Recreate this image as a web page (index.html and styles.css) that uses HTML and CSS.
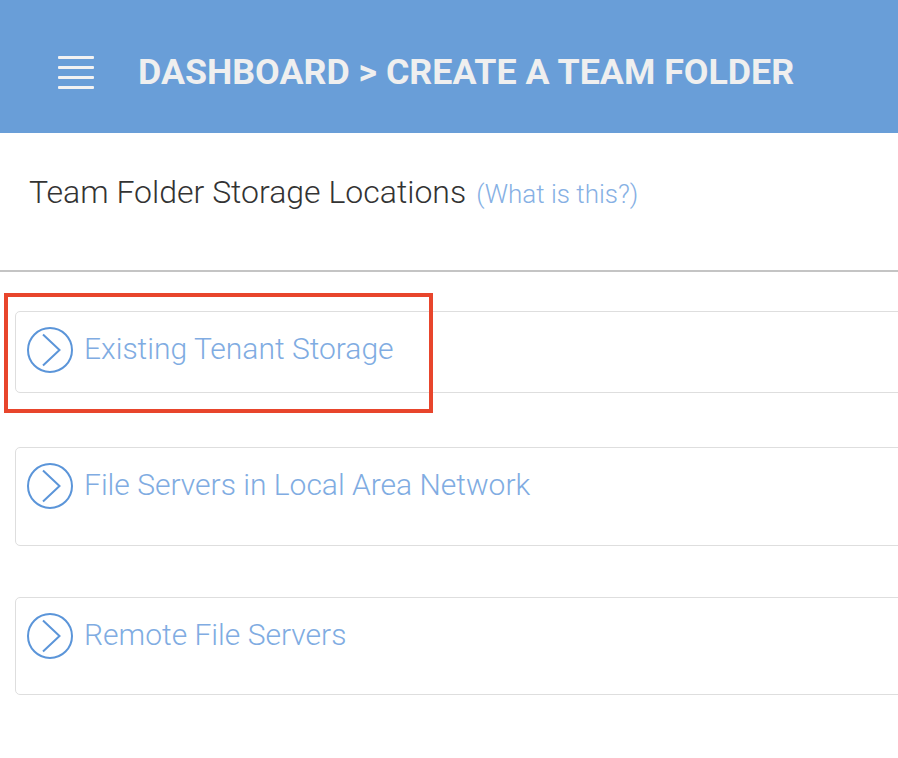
FILE: index.html
```html
<!DOCTYPE html>
<html>
<head>
  <title>Create a Team Folder</title>
  <meta name="viewport" content="width=device-width, initial-scale=1.0">
  <link rel="stylesheet" href="styles.css">
</head>
<body>
  <div class="topbar">
    <div class="menu-icon">
      <span></span><span></span><span></span><span></span>
    </div>
    <h1>DASHBOARD &gt; CREATE A TEAM FOLDER</h1>
  </div>

  <div class="section-head">
    <h2>Team Folder Storage Locations</h2>
    <a class="help" href="#">(What is this?)</a>
  </div>

  <div class="locations">
    <!-- first card is highlighted -->
    <div class="loc-card short">
      <div class="highlight"></div>
      <svg class="go" width="48" height="48" viewBox="0 0 48 48">
        <circle cx="24" cy="24" r="22" fill="none" stroke="#5b95d9" stroke-width="2"/>
        <path d="M17 8.5 L33.5 24 L17 39.5" fill="none" stroke="#5b95d9" stroke-width="2"/>
      </svg>
      <span>Existing Tenant Storage</span>
    </div>
    <div class="loc-card">
      <svg class="go" width="48" height="48" viewBox="0 0 48 48">
        <circle cx="24" cy="24" r="22" fill="none" stroke="#5b95d9" stroke-width="2"/>
        <path d="M17 8.5 L33.5 24 L17 39.5" fill="none" stroke="#5b95d9" stroke-width="2"/>
      </svg>
      <span>File Servers in Local Area Network</span>
    </div>
    <div class="loc-card last">
      <svg class="go" width="48" height="48" viewBox="0 0 48 48">
        <circle cx="24" cy="24" r="22" fill="none" stroke="#5b95d9" stroke-width="2"/>
        <path d="M17 8.5 L33.5 24 L17 39.5" fill="none" stroke="#5b95d9" stroke-width="2"/>
      </svg>
      <span>Remote File Servers</span>
    </div>
  </div>
</body>
</html>
```

FILE: styles.css
```css
body {
  margin: 0;
  font-family: Roboto, "Liberation Sans", sans-serif;
  background-color: #fff;
  overflow: hidden;
}
.topbar {
  height: 133px;
  background-color: #699ed8;
  display: flex;
  align-items: center;
  padding-left: 58px;
}
.menu-icon {
  width: 36px;
  display: flex;
  flex-direction: column;
  gap: 7px;
  margin-right: 44px;
  margin-top: 12px;
}
.menu-icon span {
  height: 3px;
  background: #f2f2f2;
  border-radius: 1px;
}
.topbar h1 {
  margin: 0;
  margin-top: 10px;
  font-size: 35.8px;
  font-weight: 700;
  color: #efefef;
}
.section-head {
  height: 139px;
  border-bottom: 2px solid #c4c4c4;
  display: flex;
  align-items: baseline;
  padding-left: 29px;
  box-sizing: border-box;
  padding-top: 40px;
}
.section-head h2 {
  margin: 0;
  font-size: 32px;
  font-weight: 300;
  color: #333;
}
.help {
  margin-left: 10px;
  font-size: 26px;
  font-weight: 300;
  color: #86b0e4;
  text-decoration: none;
}
.locations {
  padding: 39px 0 0 15px;
  margin-right: -20px;
  display: flex;
  flex-direction: column;
  gap: 51px;
}
.loc-card {
  position: relative;
  height: 99px;
  border: 1px solid #dedede;
  border-radius: 5px;
  display: flex;
  align-items: flex-start;
  padding: 14px 0 0 10px;
  box-sizing: border-box;
}
.loc-card.short {
  height: 82px;
  margin-bottom: 3px;
}
.loc-card.last {
  height: 98px;
}
.loc-card .go {
  flex-shrink: 0;
}
.loc-card span {
  margin-left: 10px;
  margin-top: 5px;
  font-size: 30px;
  font-weight: 300;
  color: #80ace2;
}
.highlight {
  position: absolute;
  left: -12px;
  top: -19px;
  width: 421px;
  height: 112px;
  border: 4px solid #e8452c;
}
```
